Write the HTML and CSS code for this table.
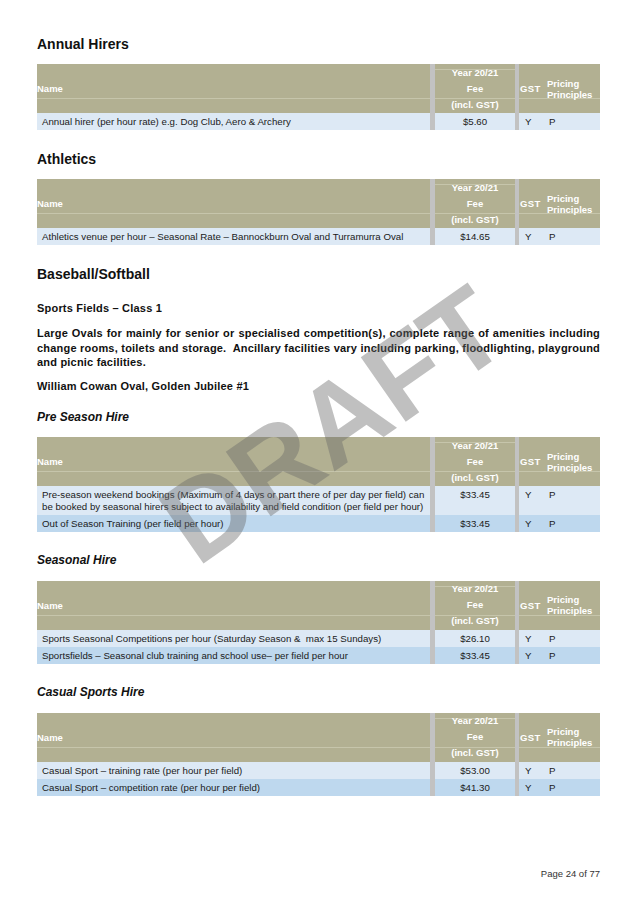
FILE: index.html
```html
<!DOCTYPE html>
<html>
<head>
<meta charset="utf-8">
<link rel="stylesheet" href="styles.css">
</head>
<body>
<div class="page">
  <h2 class="h-first">Annual Hirers</h2>
  <div class="fees">
    <div class="row head">
      <div class="c name">Name</div>
      <div class="c fee"><span>Year 20/21</span><span>Fee</span><span>(incl. GST)</span></div>
      <div class="c gst">GST</div>
      <div class="c pp">Pricing Principles</div>
    </div>
    <div class="row light">
      <div class="c name">Annual hirer (per hour rate) e.g. Dog Club, Aero &amp; Archery</div>
      <div class="c fee">$5.60</div>
      <div class="c gst">Y</div>
      <div class="c pp">P</div>
    </div>
  </div>

  <h2>Athletics</h2>
  <div class="fees">
    <div class="row head">
      <div class="c name">Name</div>
      <div class="c fee"><span>Year 20/21</span><span>Fee</span><span>(incl. GST)</span></div>
      <div class="c gst">GST</div>
      <div class="c pp">Pricing Principles</div>
    </div>
    <div class="row light">
      <div class="c name">Athletics venue per hour – Seasonal Rate – Bannockburn Oval and Turramurra Oval</div>
      <div class="c fee">$14.65</div>
      <div class="c gst">Y</div>
      <div class="c pp">P</div>
    </div>
  </div>

  <h2>Baseball/Softball</h2>
  <h3>Sports Fields – Class 1</h3>
  <p class="desc">Large Ovals for mainly for senior or specialised competition(s), complete range of amenities including change rooms, toilets and storage.&nbsp; Ancillary facilities vary including parking, floodlighting, playground and picnic facilities.</p>
  <h3 class="venue">William Cowan Oval, Golden Jubilee #1</h3>

  <h4>Pre Season Hire</h4>
  <div class="fees">
    <div class="row head">
      <div class="c name">Name</div>
      <div class="c fee"><span>Year 20/21</span><span>Fee</span><span>(incl. GST)</span></div>
      <div class="c gst">GST</div>
      <div class="c pp">Pricing Principles</div>
    </div>
    <div class="row light">
      <div class="c name">Pre-season weekend bookings (Maximum of 4 days or part there of per day per field) can be booked by seasonal hirers subject to availability and field condition (per field per hour)</div>
      <div class="c fee">$33.45</div>
      <div class="c gst">Y</div>
      <div class="c pp">P</div>
    </div>
    <div class="row dark">
      <div class="c name">Out of Season Training (per field per hour)</div>
      <div class="c fee">$33.45</div>
      <div class="c gst">Y</div>
      <div class="c pp">P</div>
    </div>
  </div>

  <h4>Seasonal Hire</h4>
  <div class="fees">
    <div class="row head">
      <div class="c name">Name</div>
      <div class="c fee"><span>Year 20/21</span><span>Fee</span><span>(incl. GST)</span></div>
      <div class="c gst">GST</div>
      <div class="c pp">Pricing Principles</div>
    </div>
    <div class="row light">
      <div class="c name">Sports Seasonal Competitions per hour (Saturday Season &amp;&nbsp; max 15 Sundays)</div>
      <div class="c fee">$26.10</div>
      <div class="c gst">Y</div>
      <div class="c pp">P</div>
    </div>
    <div class="row dark">
      <div class="c name">Sportsfields – Seasonal club training and school use– per field per hour</div>
      <div class="c fee">$33.45</div>
      <div class="c gst">Y</div>
      <div class="c pp">P</div>
    </div>
  </div>

  <h4>Casual Sports Hire</h4>
  <div class="fees">
    <div class="row head">
      <div class="c name">Name</div>
      <div class="c fee"><span>Year 20/21</span><span>Fee</span><span>(incl. GST)</span></div>
      <div class="c gst">GST</div>
      <div class="c pp">Pricing Principles</div>
    </div>
    <div class="row light">
      <div class="c name">Casual Sport – training rate (per hour per field)</div>
      <div class="c fee">$53.00</div>
      <div class="c gst">Y</div>
      <div class="c pp">P</div>
    </div>
    <div class="row dark">
      <div class="c name">Casual Sport – competition rate (per hour per field)</div>
      <div class="c fee">$41.30</div>
      <div class="c gst">Y</div>
      <div class="c pp">P</div>
    </div>
  </div>

  <div class="footer">Page 24 of 77</div>

  <div class="watermark">DRAFT</div>
</div>
</body>
</html>
```

FILE: styles.css
```css
html, body {
  margin: 0;
  padding: 0;
  background: #ffffff;
}

.page {
  position: relative;
  width: 637px;
  height: 902px;
  box-sizing: border-box;
  padding: 0 37px;
  font-family: "Liberation Sans", Arial, sans-serif;
  color: #111111;
  overflow: hidden;
}

h2 {
  margin: 19px 0 10px;
  font-size: 14px;
  line-height: 20px;
  font-weight: bold;
  color: #111111;
}

h2.h-first {
  margin-top: 0;
  padding-top: 34px;
}

h3 {
  margin: 17px 0 0;
  font-size: 11px;
  line-height: 14px;
  font-weight: bold;
  letter-spacing: 0.2px;
}

h3.venue {
  margin-top: 9px;
}

.desc {
  margin: 11px 0 0;
  font-size: 11px;
  line-height: 14.5px;
  font-weight: bold;
  text-align: justify;
  letter-spacing: 0.2px;
}

h4 {
  margin: 17px 0 12.5px;
  font-size: 12px;
  line-height: 15px;
  font-weight: bold;
  font-style: italic;
}

.fees + h4 {
  margin-top: 21.5px;
}

.fees {
  width: 563px;
}

.row {
  display: grid;
  grid-template-columns: 398px 84px 26px 55px;
}

.c {
  box-sizing: border-box;
}

.c.name {
  border-right: 5px solid #c2c2c2;
}

.c.fee {
  border-right: 4px solid #c2c2c2;
}

.head {
  height: 49px;
  background: #b2b092;
  color: #ffffff;
  font-size: 9.5px;
  font-weight: bold;
  background-image: linear-gradient(to bottom, transparent 34px, #c6c5ab 34px, #c6c5ab 35px, transparent 35px);
}

.head .c {
  display: flex;
  align-items: center;
}

.head .fee {
  flex-direction: column;
  justify-content: center;
  align-items: center;
  gap: 4px;
  line-height: 12px;
  background-image: linear-gradient(to bottom, transparent 5px, #c6c5ab 5px, #c6c5ab 6px, transparent 6px);
}

.head .gst {
  padding-left: 1px;
  letter-spacing: 0.4px;
}

.head .pp {
  padding-left: 2px;
  line-height: 11px;
}

.row.light,
.row.dark {
  font-size: 9.7px;
  line-height: 11.5px;
  color: #1a1a1a;
}

.row.light {
  background: #dde9f5;
}

.row.dark {
  background: #bed8ee;
}

.row.light .c,
.row.dark .c {
  padding-top: 3px;
  padding-bottom: 2.5px;
}

.row.light .name,
.row.dark .name {
  padding-left: 5px;
  padding-right: 0;
}

.row.light .fee,
.row.dark .fee {
  text-align: center;
}

.row.light .gst,
.row.dark .gst {
  padding-left: 6px;
}

.row.light .pp,
.row.dark .pp {
  padding-left: 4px;
}

.footer {
  margin-top: 71px;
  text-align: right;
  font-size: 9.5px;
  line-height: 14px;
  color: #333333;
}

.watermark {
  position: absolute;
  left: 333px;
  top: 425px;
  transform: translate(-50%, -50%) rotate(-35deg);
  font-family: "Liberation Sans", Arial, sans-serif;
  font-weight: bold;
  font-size: 114px;
  line-height: 1;
  color: rgba(105, 105, 105, 0.42);
  white-space: nowrap;
  pointer-events: none;
}
```
